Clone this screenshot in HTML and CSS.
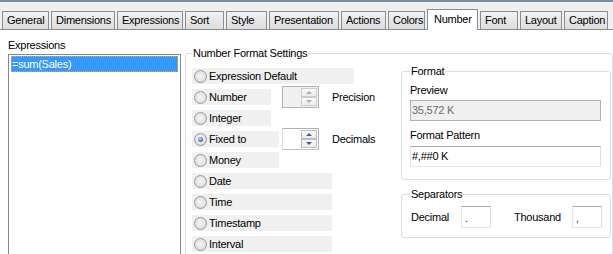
FILE: index.html
```html
<!DOCTYPE html>
<html lang="en">

<head>
    <meta charset="UTF-8" />
    <title>Chart Properties - Number</title>
    <link rel="stylesheet" href="styles.css">
</head>

<body>
    <div class="window">
        <div class="tabs">
            <div class="tab tab-general">General</div>
            <div class="tab tab-dimensions">Dimensions</div>
            <div class="tab tab-expressions">Expressions</div>
            <div class="tab tab-sort">Sort</div>
            <div class="tab tab-style">Style</div>
            <div class="tab tab-presentation">Presentation</div>
            <div class="tab tab-actions">Actions</div>
            <div class="tab tab-colors">Colors</div>
            <div class="tab tab-number active">Number</div>
            <div class="tab tab-font">Font</div>
            <div class="tab tab-layout">Layout</div>
            <div class="tab tab-caption">Caption</div>
        </div>

        <div class="panel">
            <div class="expr-col">
                <div class="caption">Expressions</div>
                <div class="listbox">
                    <div class="list-item selected">=sum(Sales)</div>
                </div>
            </div>

            <fieldset class="group settings">
                <legend>Number Format Settings</legend>
                <div class="settings-body">
                    <div class="choices">
                        <div class="row">
                            <div class="choice w-wide"><span class="radio"></span>Expression Default</div>
                        </div>
                        <div class="row with-spin">
                            <div class="choice w-short"><span class="radio"></span>Number</div>
                            <div class="spin">
                                <div class="spin-btns">
                                    <div class="spin-btn"><span class="arrow-up"></span></div>
                                    <div class="spin-btn"><span class="arrow-down"></span></div>
                                </div>
                            </div>
                            <div>Precision</div>
                        </div>
                        <div class="row">
                            <div class="choice w-short"><span class="radio"></span>Integer</div>
                        </div>
                        <div class="row with-spin">
                            <div class="choice w-mid"><span class="radio checked"></span>Fixed to</div>
                            <div class="spin on">
                                <div class="spin-btns">
                                    <div class="spin-btn"><span class="arrow-up"></span></div>
                                    <div class="spin-btn"><span class="arrow-down"></span></div>
                                </div>
                            </div>
                            <div>Decimals</div>
                        </div>
                        <div class="row">
                            <div class="choice w-mid"><span class="radio"></span>Money</div>
                        </div>
                        <div class="row">
                            <div class="choice w-long"><span class="radio"></span>Date</div>
                        </div>
                        <div class="row">
                            <div class="choice w-long"><span class="radio"></span>Time</div>
                        </div>
                        <div class="row">
                            <div class="choice w-long"><span class="radio"></span>Timestamp</div>
                        </div>
                        <div class="row">
                            <div class="choice w-long"><span class="radio"></span>Interval</div>
                        </div>
                    </div>

                    <div class="side">
                        <fieldset class="group format">
                            <legend>Format</legend>
                            <div class="label">Preview</div>
                            <div class="field disabled">35,572 K</div>
                            <div class="label pattern-label">Format Pattern</div>
                            <div class="field pattern">#,##0 K</div>
                        </fieldset>

                        <fieldset class="group separators">
                            <legend>Separators</legend>
                            <div class="sep-row">
                                <div>Decimal</div>
                                <div class="field small">.</div>
                                <div></div>
                                <div>Thousand</div>
                                <div class="field small comma">,</div>
                            </div>
                        </fieldset>
                    </div>
                </div>
            </fieldset>
        </div>
    </div>
</body>

</html>
```

FILE: styles.css
```css
* {
    box-sizing: border-box;
}

body {
    margin: 0;
    font-family: 'Liberation Sans', Arial, sans-serif;
    font-size: 11px;
    letter-spacing: -0.25px;
    color: #000;
    background: #fff;
    height: 254px;
    overflow: hidden;
}

.window {
    border-top: 2px solid #7b8ca0;
}

/* tab strip */
.tabs {
    display: flex;
    align-items: flex-end;
    gap: 2px;
    height: 28px;
    padding-left: 2px;
    background: #f0f0f0;
    border-bottom: 1px solid #898c95;
}

.tab {
    flex: none;
    height: 18px;
    padding-left: 4px;
    border: 1px solid #898c95;
    border-bottom: none;
    background: linear-gradient(#f3f3f3, #e6e6e6 50%, #dedede);
    line-height: 17px;
    white-space: nowrap;
}

.tab.active {
    height: 21px;
    margin-bottom: -1px;
    padding: 1px 0 0 6px;
    background: #fff;
    position: relative;
}

.tab-general { width: 47px; }
.tab-dimensions { width: 64px; }
.tab-expressions { width: 66px; }
.tab-sort { width: 39px; }
.tab-style { width: 41px; }
.tab-presentation { width: 70px; }
.tab-actions { width: 45px; }
.tab-colors { width: 37px; }
.tab-number { width: 51px; }
.tab-font { width: 38px; }
.tab-layout { width: 42px; }
.tab-caption { width: 44px; }

/* page body */
.panel {
    display: flex;
    align-items: flex-start;
    padding-top: 9px;
}

.expr-col {
    flex: none;
    margin-left: 8px;
    width: 173px;
}

.caption,
.label {
    line-height: 13px;
}

.listbox {
    margin-top: 2px;
    height: 220px;
    border: 1px solid #828790;
    padding: 1px 2px;
}

.list-item {
    height: 16px;
    line-height: 16px;
    padding-left: 1px;
}

.list-item.selected {
    background: #3399ff;
    color: #fff;
    outline: 1px dotted #f0a050;
    outline-offset: -1px;
}

/* group boxes */
.group {
    margin: 0;
    min-width: 0;
    border: 1px solid #d5dfe5;
    border-radius: 3px;
}

.group legend {
    padding: 0 1px;
    line-height: 13px;
}

.settings {
    flex: none;
    margin: 8px 0 0 4px;
    width: 428px;
    height: 230px;
    padding: 5px 0 0 6px;
}

.settings-body {
    display: flex;
    align-items: flex-start;
}

.choices {
    flex: none;
    width: 209px;
    padding-top: 3px;
    display: flex;
    flex-direction: column;
    gap: 5px;
}

.row {
    height: 16px;
}

.row.with-spin {
    display: grid;
    grid-template-columns: 90px 50px auto;
    align-items: center;
}

.choice {
    display: flex;
    align-items: center;
    gap: 2px;
    height: 16px;
    padding-left: 2px;
    background: #f0f0f0;
}

.w-wide { width: 162px; }
.w-short { width: 79px; }
.w-mid { width: 87px; }
.w-long { width: 140px; }

.radio {
    width: 13px;
    height: 13px;
    flex: none;
    border-radius: 50%;
    border: 1px solid #979797;
    background: radial-gradient(circle at 50% 45%, #f6f6f6 0, #e4e4e4 55%, #cfcfcf 100%);
    display: flex;
    align-items: center;
    justify-content: center;
}

.radio.checked::after {
    content: '';
    width: 5px;
    height: 5px;
    border-radius: 50%;
    background: radial-gradient(circle at 40% 35%, #b6e0ff, #2a6fbf 70%, #17498a);
}

/* spin boxes */
.spin {
    width: 37px;
    height: 22px;
    margin: -3px 0;
    border: 1px solid #b4b4b4;
    background: #f0f0f0;
    display: flex;
    justify-content: flex-end;
    padding: 1px 1px 1px 0;
}

.spin.on {
    background: #fff;
    border-color: #b0b0b8 #b0b0b8 #c0c0c8 #dcdce6;
}

.spin-btns {
    width: 16px;
    display: flex;
    flex-direction: column;
}

.spin-btn {
    flex: 1;
    border: 1px solid #cdcdcd;
    background: linear-gradient(#fafafa, #ececec);
    display: flex;
    align-items: center;
    justify-content: center;
}

.on .spin-btn {
    border-color: #b9bdc6;
}

.arrow-up,
.arrow-down {
    width: 0;
    height: 0;
    border-left: 3px solid transparent;
    border-right: 3px solid transparent;
}

.arrow-up {
    border-bottom: 3px solid #acacac;
}

.arrow-down {
    border-top: 3px solid #acacac;
}

.on .arrow-up {
    border-bottom-color: #3b5ca6;
}

.on .arrow-down {
    border-top-color: #3b5ca6;
}

/* right column */
.side {
    flex: none;
    width: 210px;
}

.format {
    padding: 6px 9px 12px 8px;
}

.field {
    height: 21px;
    margin-top: 3px;
    border: 1px solid;
    border-color: #abadb3 #dbdfe6 #e3e9ef #e2e3ea;
    background: #fff;
    padding-left: 1px;
    line-height: 19px;
}

.field.disabled {
    background: #f0f0f0;
    border-color: #adb2b5;
    color: #6d6d6d;
}

.pattern-label {
    margin-top: 8px;
}

.field.pattern {
    margin-top: 4px;
}

.separators {
    margin-top: 8px;
    padding: 5px 9px 9px 8px;
}

.sep-row {
    display: grid;
    grid-template-columns: 50px 30px 23px 58px 30px;
    align-items: center;
    padding-left: 1px;
}

.field.small {
    height: 22px;
    margin-top: 0;
    padding-left: 3px;
    line-height: 22px;
    color: #333;
}

.field.comma {
    color: #8a1020;
}
```
